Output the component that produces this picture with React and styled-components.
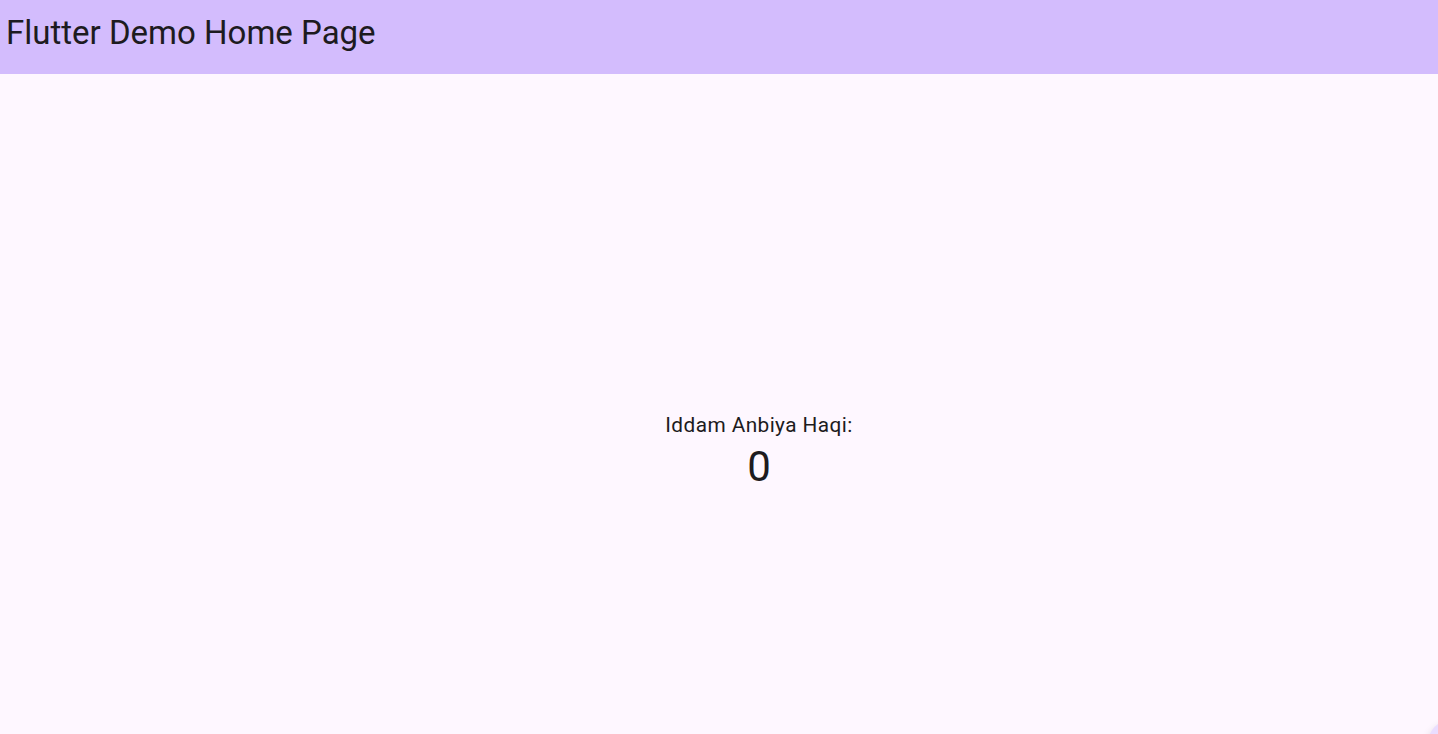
import React from "react";
import styled, { createGlobalStyle } from "styled-components";

const GlobalStyle = createGlobalStyle`
    html, body {
        margin: 0;
        padding: 0;
        height: 100%;
        overflow: hidden;
        background: #fef7ff;
        font-family: Roboto, "Noto Sans", sans-serif;
        color: #1d1b20;
    }
`;

const Page = styled.div`
    display: flex;
    flex-direction: column;
    width: 1518px;
`;

const AppBar = styled.header`
    display: flex;
    align-items: center;
    height: 74px;
    padding: 0 6px;
    background: #d3bcfd;
`;

const Title = styled.h1`
    margin: 0;
    font-size: 33px;
    font-weight: 400;
    color: #1d1b20;
    padding-bottom: 10px;
`;

const Body = styled.main`
    display: flex;
    flex-direction: column;
    align-items: center;
    justify-content: center;
    height: 754px;
    padding-top: 4px;
    box-sizing: border-box;
`;

const Label = styled.div`
    font-size: 20.8px;
    letter-spacing: 0.42px;
    line-height: 28px;
`;

const Counter = styled.div`
    font-size: 42px;
    line-height: 56px;
`;

const Fab = styled.button`
    position: fixed;
    right: -76px;
    bottom: -72px;
    width: 86px;
    height: 86px;
    border: none;
    border-radius: 23px;
    background: #eaddff;
    box-shadow: 0 4px 8px rgba(0, 0, 0, 0.15);
`;

export default function App() {
    return (
        <Page>
            <GlobalStyle />
            <AppBar>
                <Title>Flutter Demo Home Page</Title>
            </AppBar>
            <Body>
                <Label>Iddam Anbiya Haqi:</Label>
                <Counter>0</Counter>
            </Body>
            <Fab aria-label="Increment" />
        </Page>
    );
}
